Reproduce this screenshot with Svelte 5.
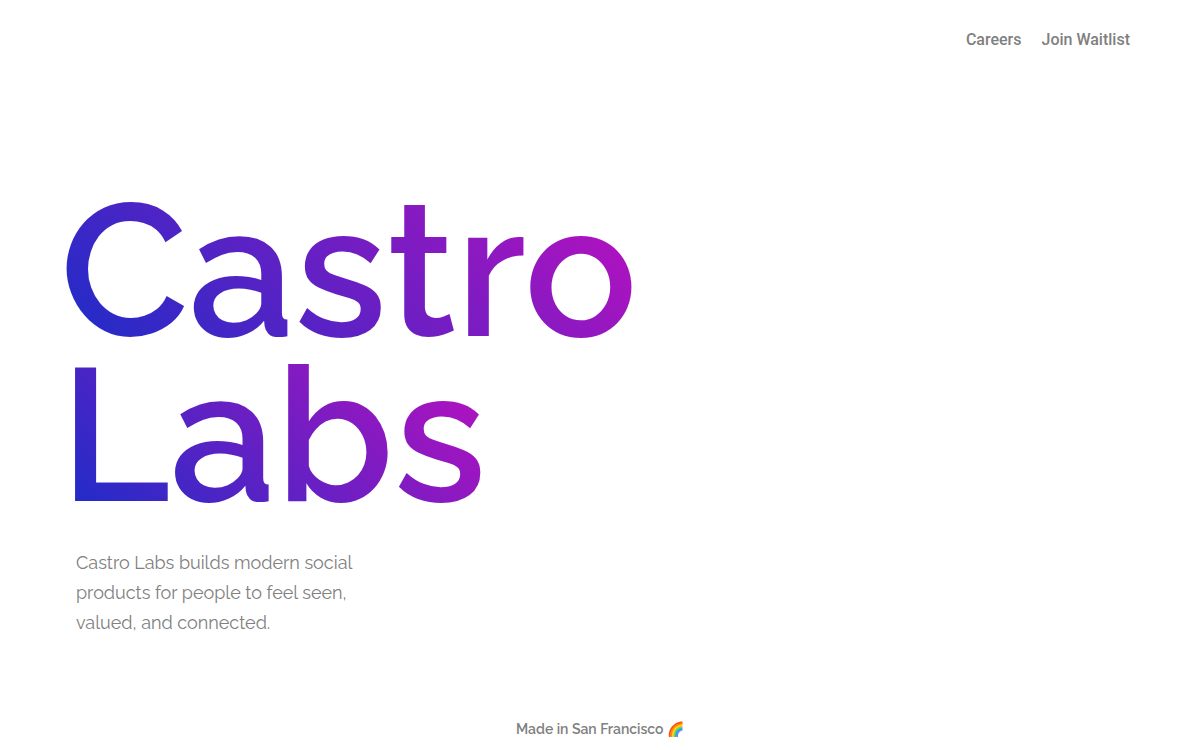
<script lang="ts">
  const links = [
    { label: 'Careers', href: '#careers' },
    { label: 'Join Waitlist', href: '#waitlist' }
  ];

  const title = ['Castro', 'Labs'];
</script>

<div class="page">
  <header>
    <nav aria-label="Main">
      {#each links as link}
        <a href={link.href}>{link.label}</a>
      {/each}
    </nav>
  </header>

  <main>
    <h1>
      {#each title as word}
        <span>{word}</span>
      {/each}
    </h1>
    <p>Castro Labs builds modern social products for people to feel seen, valued, and connected.</p>
  </main>

  <footer>Made in San Francisco 🌈</footer>
</div>

<style>
  :global(body) {
    background: #fff;
  }

  .page {
    display: flex;
    flex-direction: column;
    min-height: 100vh;
    box-sizing: border-box;
    padding: 28px 0 9px;
    color: #808080;
    font-family: Raleway, Lato, sans-serif;
  }

  nav {
    display: flex;
    justify-content: flex-end;
    gap: 20px;
    padding: 0 70px;
  }

  nav a {
    color: inherit;
    font-family: Roboto, sans-serif;
    font-size: 16px;
    font-weight: 500;
    line-height: 24px;
    text-decoration: none;
  }

  main {
    flex: 1;
    padding: 135px 60px 0;
  }

  h1 {
    display: flex;
    flex-direction: column;
    align-items: flex-start;
    margin: 0;
    font-size: 188px;
    font-weight: 600;
    line-height: 165px;
  }

  h1 span {
    background: linear-gradient(45deg, #1a2dc8 0%, #bd10be 100%);
    background-clip: text;
    -webkit-background-clip: text;
    color: transparent;
  }

  p {
    width: 300px;
    margin: 31px 0 0 16px;
    font-size: 18px;
    font-weight: 400;
    line-height: 30px;
  }

  footer {
    font-size: 14px;
    font-weight: 600;
    line-height: 24px;
    text-align: center;
  }
</style>
